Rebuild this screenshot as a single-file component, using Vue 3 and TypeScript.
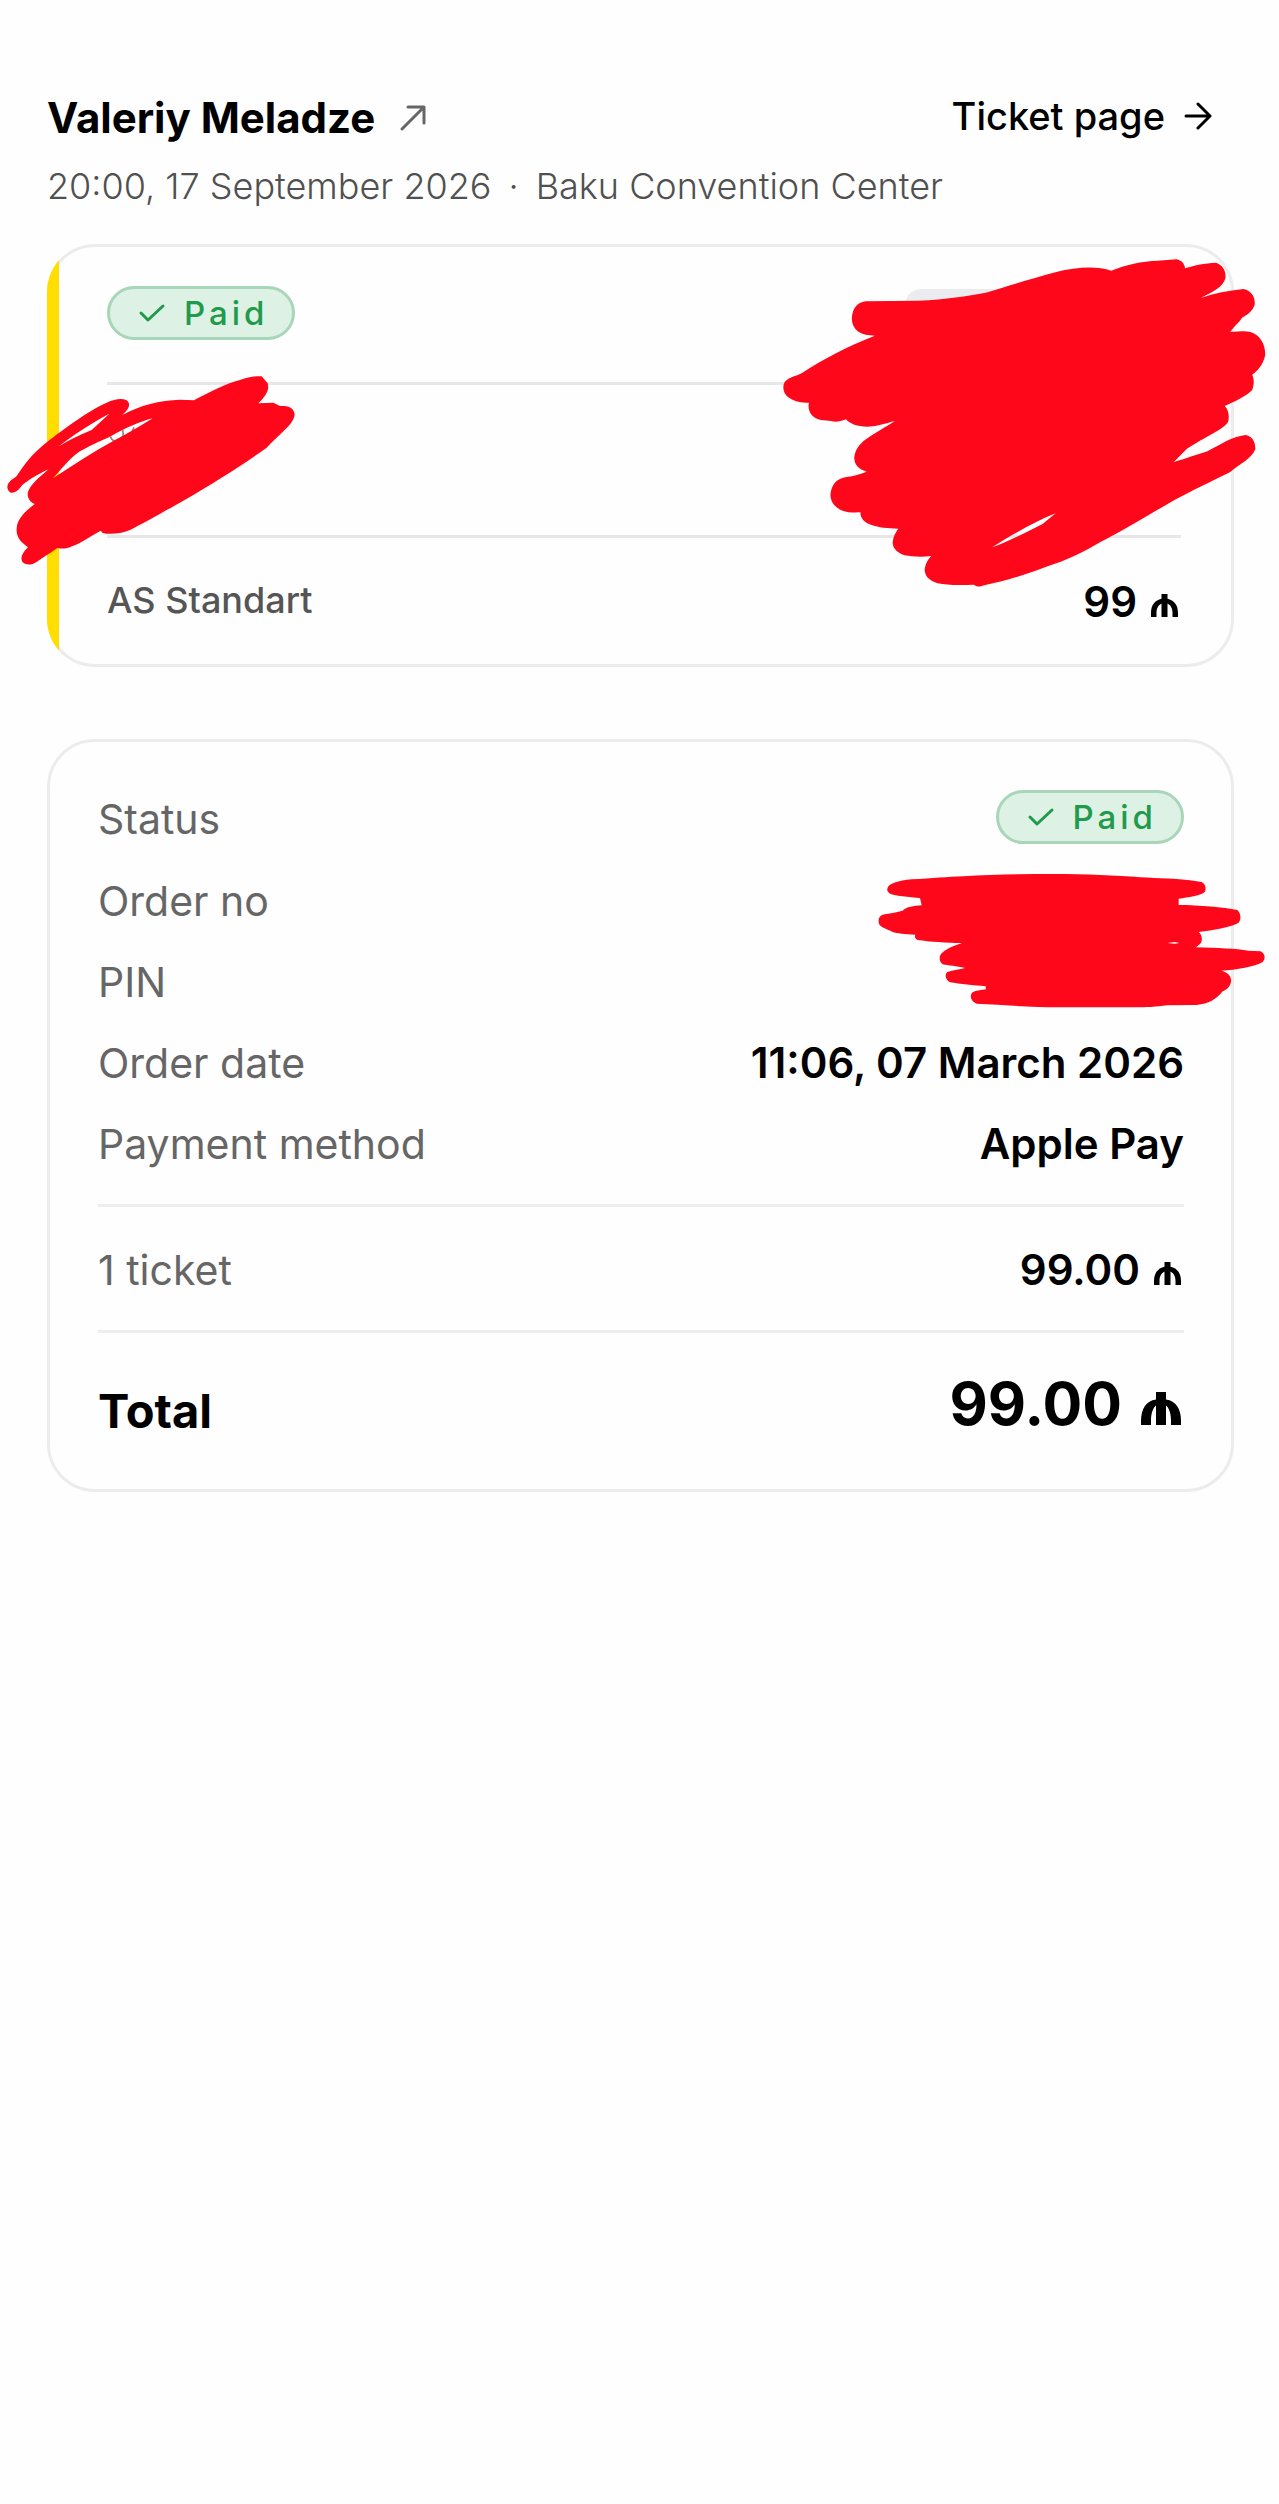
<script setup lang="ts">
interface DetailRow {
  label: string
  value: string
}

const event = {
  title: 'Valeriy Meladze',
  time: '20:00, 17 September 2026',
  venue: 'Baku Convention Center',
}

const details: DetailRow[] = [
  { label: 'Order no', value: '' },
  { label: 'PIN', value: '' },
  { label: 'Order date', value: '11:06, 07 March 2026' },
  { label: 'Payment method', value: 'Apple Pay' },
]
</script>

<template>
  <main class="page">
    <header class="header">
      <div class="header-row">
        <h1 class="title">
          <a href="#event" class="title-link">
            {{ event.title }}
            <svg class="icon-out" viewBox="0 0 28 28" aria-hidden="true">
              <path d="M3 25 25 3M9 3H25V19" />
            </svg>
          </a>
        </h1>
        <a href="#ticket" class="ticket-link">
          Ticket page
          <svg class="icon-right" viewBox="0 0 28 28" aria-hidden="true">
            <path d="M2 14H26M14 2 26 14 14 26" />
          </svg>
        </a>
      </div>
      <p class="meta">
        <span>{{ event.time }}</span>
        <span>·</span>
        <span>{{ event.venue }}</span>
      </p>
    </header>

    <section class="card ticket">
      <span class="stripe"></span>
      <div class="ticket-head">
        <span class="badge">
          <svg class="icon-check" viewBox="0 0 24 16" aria-hidden="true">
            <path d="M1 8 8 15 23 1" />
          </svg>
          Paid
        </span>
        <span class="chip"></span>
      </div>
      <div class="ticket-seat"></div>
      <div class="ticket-foot">
        <span class="ticket-type">AS Standart</span>
        <span class="amount">99
          <svg class="manat" viewBox="0 0 27 23" role="img" aria-label="manat">
            <path d="M10.5 0h6v4.700C23 6 27 11 27 19v4h-5.500v-4c0-5-2-8-5-9.500v13.500h-6V9.500C7.500 11 5.500 14 5.500 19v4H0v-4C0 11 4 6 10.500 4.700z" />
          </svg>
        </span>
      </div>

      <svg class="mark mark-seat" viewBox="0 90 900 600" preserveAspectRatio="none" aria-hidden="true">
        <path class="trace" d="M332 290C334 304 350 306 358 300C368 294 372 288 368 270M392 285 402 262" />
        <path
          fill-rule="evenodd"
          d="M24 432C32 418 42 416 50 408C75 370 95 345 130 315C180 275 260 215 320 188C345 177 365 174 380 181C392 190 390 205 366 226C420 195 480 181 540 179L582 181C620 160 680 130 720 120C745 112 765 107 785 109L803 130C808 150 800 165 775 190L820 188L840 198C860 197 880 200 884 222C882 250 860 262 800 323C720 380 640 430 550 482C500 510 430 550 390 570C360 582 330 584 308 579L302 572C270 590 240 610 218 618C200 627 185 627 172 624C150 640 125 655 110 666C95 675 80 677 68 667C60 655 65 640 84 622C60 605 48 590 50 565C52 535 75 515 104 492C88 485 80 470 84 455C95 430 120 410 146 388C115 402 85 420 66 436C55 452 45 460 32 458C22 452 20 442 24 432ZM175 320C205 300 240 285 275 270L328 221C280 245 220 285 175 320ZM160 414C220 375 280 335 345 300C385 280 420 258 458 235C420 245 380 262 330 290C310 300 280 310 240 334C215 350 190 380 160 414Z"
        />
      </svg>
      <svg class="mark mark-number" viewBox="116 30 1452 1050" preserveAspectRatio="none" aria-hidden="true">
        <path
          fill-rule="evenodd"
          d="M325 235C327 205 340 188 365 184L520 182C600 178 660 168 715 158C790 135 850 115 920 96C980 80 1040 78 1080 92C1120 75 1170 63 1215 62L1270 58C1285 62 1292 70 1295 85C1325 75 1350 70 1385 68C1405 75 1415 95 1412 115C1405 140 1380 155 1340 174C1380 160 1420 152 1465 147C1490 152 1500 175 1497 195C1490 215 1475 225 1462 232C1450 250 1435 262 1426 276C1450 275 1470 272 1485 276C1515 285 1528 315 1528 345C1522 375 1505 393 1490 404C1497 420 1495 435 1490 450C1470 470 1440 485 1410 498C1422 510 1424 530 1420 545C1405 568 1380 575 1300 626L1262 666C1300 655 1330 643 1360 634C1400 612 1430 590 1470 585C1490 588 1500 605 1499 628C1490 655 1450 675 1425 697C1370 725 1310 755 1260 782C1180 830 1100 880 1050 905C1000 935 960 955 920 970C860 992 790 1020 710 1036C695 1042 688 1040 680 1034C640 1036 600 1036 575 1030C545 1020 537 1005 537 988C540 970 545 960 556 948C530 952 500 950 478 946C450 935 443 920 444 905C446 888 452 878 460 866C430 866 400 862 385 856C360 848 350 835 350 817C330 818 310 817 298 812C270 800 262 780 263 762C266 735 280 715 310 711C330 708 350 702 368 695C345 688 332 675 332 652C335 630 345 615 360 602C390 580 425 560 450 543C420 552 390 560 370 560C340 560 320 552 308 538C290 546 275 547 265 543L235 540C210 535 195 515 200 488C175 490 155 483 140 472C125 460 122 440 130 425C145 410 165 408 180 399C240 358 310 320 392 287L365 284C340 278 325 262 325 235ZM733 922C780 905 830 878 880 852L918 820C850 848 780 892 733 922Z"
        />
      </svg>
    </section>

    <section class="card order">
      <dl class="rows">
        <div class="row row-status">
          <dt>Status</dt>
          <dd>
            <span class="badge">
              <svg class="icon-check" viewBox="0 0 24 16" aria-hidden="true">
                <path d="M1 8 8 15 23 1" />
              </svg>
              Paid
            </span>
          </dd>
        </div>
        <div v-for="row in details" :key="row.label" class="row">
          <dt>{{ row.label }}</dt>
          <dd>{{ row.value }}</dd>
        </div>
      </dl>
      <dl class="rows rows-tickets">
        <div class="row">
          <dt>1 ticket</dt>
          <dd class="amount">99.00
            <svg class="manat" viewBox="0 0 27 23" role="img" aria-label="manat">
              <path d="M10.5 0h6v4.700C23 6 27 11 27 19v4h-5.500v-4c0-5-2-8-5-9.500v13.500h-6V9.500C7.500 11 5.500 14 5.500 19v4H0v-4C0 11 4 6 10.500 4.700z" />
            </svg>
          </dd>
        </div>
      </dl>
      <dl class="rows rows-total">
        <div class="total">
          <dt>Total</dt>
          <dd class="amount amount-total">99.00
            <svg class="manat" viewBox="0 0 40 33" role="img" aria-label="manat">
              <path d="M15 0h10v7.500C35 9 40 17 40 29v4H30v-4c0-8-2-13-5-15.500V33H15V13.500C12 16 10 21 10 29v4H0v-4C0 17 5 9 15 7.500z" />
            </svg>
          </dd>
        </div>
      </dl>

      <svg class="mark mark-order" viewBox="90 330 1227 420" preserveAspectRatio="none" aria-hidden="true">
        <path
          fill-rule="evenodd"
          d="M142 386C145 370 175 362 215 358C280 356 320 350 370 349C450 343 550 342 640 342C740 342 830 346 900 352C960 355 1010 356 1050 361L1085 366C1098 372 1099 390 1094 396C1080 408 1045 412 1016 416L1016 435C1080 435 1150 442 1192 450C1203 460 1204 478 1196 488C1170 502 1120 510 1076 516C1088 525 1088 545 1080 552L1068 562C1130 564 1190 566 1225 572L1262 574C1276 582 1277 596 1268 606C1245 620 1190 630 1143 632C1165 636 1175 650 1173 665C1170 682 1160 688 1148 694C1130 718 1105 732 1070 735L980 736C950 741 920 742 880 742L620 742C550 740 480 734 410 731C393 725 388 708 396 698C405 692 425 690 438 688L437 679C400 676 360 672 330 667C315 660 314 642 322 636C340 630 360 628 375 624C350 618 325 617 308 613C297 605 297 590 303 582C318 565 345 556 366 549C320 549 270 545 232 540C224 535 224 530 226 524C195 523 170 520 158 516C145 508 125 505 117 492C113 475 120 465 135 463C155 459 170 457 188 452C200 440 220 438 245 436L240 414C210 412 160 408 148 400C142 395 141 390 142 386ZM982 549 1005 546 1018 549 1005 551Z"
        />
      </svg>
    </section>
  </main>
</template>

<style>
body {
  margin: 0;
  background: #fefefe;
}
</style>

<style scoped>
.page {
  padding: 92px 45px 48px 47px;
  font-family: Inter, "Liberation Sans", sans-serif;
  font-optical-sizing: none;
  color: #000;
}

.header-row {
  display: flex;
  align-items: flex-start;
  justify-content: space-between;
  padding-right: 22px;
}

.title {
  margin: 0;
  font-size: 42px;
  line-height: 52px;
  font-weight: 700;
}

.title-link,
.ticket-link {
  display: flex;
  align-items: center;
  color: inherit;
  text-decoration: none;
}

.title-link {
  gap: 24px;
}

.ticket-link {
  gap: 19px;
  font-size: 38px;
  line-height: 48px;
  font-weight: 500;
}

.icon-out,
.icon-right {
  width: 28px;
  height: 28px;
  fill: none;
  stroke: currentColor;
  stroke-width: 3;
  stroke-linecap: round;
  stroke-linejoin: round;
}

.icon-out {
  color: #666;
}

.meta {
  display: flex;
  gap: 17px;
  margin: 20px 0 36px;
  font-size: 36px;
  line-height: 44px;
  font-weight: 300;
  color: #505050;
}

.card {
  position: relative;
  border: 3px solid #ececec;
  border-radius: 48px;
}

.ticket {
  padding: 39px 50px 0 57px;
}

.stripe {
  position: absolute;
  inset: -3px;
  border-radius: 48px;
  overflow: hidden;
}

.stripe::before {
  content: "";
  display: block;
  width: 12px;
  height: 100%;
  background: #ffde00;
}

.ticket-head {
  display: flex;
  justify-content: space-between;
  padding-bottom: 42px;
  border-bottom: 3px solid #e7e7e7;
}

.badge {
  display: inline-flex;
  align-items: center;
  gap: 20px;
  box-sizing: border-box;
  height: 54px;
  padding: 0 24px 0 30px;
  border: 3px solid #a9d5b9;
  border-radius: 27px;
  background: #ddf1e4;
  color: #219a4c;
  font-size: 33px;
  line-height: 48px;
  font-weight: 500;
  letter-spacing: 4px;
}

.icon-check {
  width: 24px;
  height: 16px;
  fill: none;
  stroke: currentColor;
  stroke-width: 3;
  stroke-linecap: round;
  stroke-linejoin: round;
  overflow: visible;
}

.chip {
  width: 276px;
  height: 48px;
  margin-top: 3px;
  border-radius: 16px;
  background: #ececf0;
}

.ticket-seat {
  height: 150px;
  border-bottom: 3px solid #e7e7e7;
}

.ticket-foot {
  display: flex;
  align-items: flex-end;
  justify-content: space-between;
  padding: 35px 0 37px;
}

.ticket-type {
  font-size: 36px;
  line-height: 54px;
  font-weight: 500;
  color: #555;
}

.amount {
  display: flex;
  align-items: baseline;
  gap: 14px;
  padding-right: 3px;
  font-size: 42px;
  line-height: 50px;
  font-weight: 600;
}

.manat {
  width: 27px;
  height: 23px;
  fill: currentColor;
}

.order {
  margin-top: 72px;
  padding: 48px 47px 49px 48px;
}

.rows {
  display: flex;
  flex-direction: column;
  gap: 27px;
  margin: 0;
}

.rows-tickets {
  margin-top: 33px;
  padding: 36px 0 33px;
  border-top: 3px solid #eee;
  border-bottom: 3px solid #eee;
}

.rows-total {
  padding-top: 35px;
}

.row {
  display: flex;
  align-items: center;
  justify-content: space-between;
  height: 54px;
  font-size: 42px;
  line-height: 54px;
}

.row-status {
  height: 57px;
}

.row dt {
  font-size: 41px;
  color: #666;
}

.row dd {
  margin: 0;
  font-weight: 600;
}

.row-status dd {
  display: flex;
  align-self: flex-start;
}

.total {
  display: flex;
  align-items: flex-end;
  justify-content: space-between;
}

.total dt {
  font-size: 47px;
  line-height: 58px;
  font-weight: 700;
}

.total dd {
  margin: 0;
}

.amount-total {
  gap: 19px;
  font-size: 59px;
  line-height: 72px;
  font-weight: 700;
}

.amount-total .manat {
  width: 40px;
  height: 33px;
}

.mark {
  position: absolute;
  fill: #ff071a;
}

.mark-seat {
  left: -50px;
  top: 123px;
  width: 300px;
  height: 200px;
}

.mark-number {
  right: -48px;
  top: 3px;
  width: 499px;
  height: 350px;
}

.mark-order {
  right: -48px;
  top: 128px;
  width: 409px;
  height: 140px;
}

.trace {
  fill: none;
  stroke: #888;
  stroke-width: 5;
}
</style>
